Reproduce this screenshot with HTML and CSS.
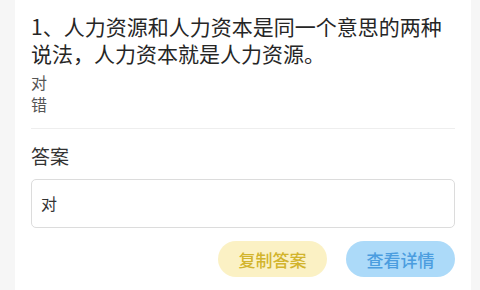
FILE: index.html
```html
<!DOCTYPE html>
<html lang="zh-CN">
<head>
    <meta charset="UTF-8">
    <meta name="viewport" content="width=device-width, initial-scale=1.0">
    <title>题目</title>
    <link rel="stylesheet" href="styles.css">
</head>
<body>
    <div class="card">
        <div class="question">1、人力资源和人力资本是同一个意思的两种说法，人力资本就是人力资源。</div>
        <ul class="options">
            <li>对</li>
            <li>错</li>
        </ul>
        <div class="divider"></div>
        <div class="answer-title">答案</div>
        <div class="answer-box">对</div>
        <div class="actions">
            <button class="btn btn-copy">复制答案</button>
            <button class="btn btn-detail">查看详情</button>
        </div>
    </div>
</body>
</html>
```

FILE: styles.css
```css
body {
    margin: 0;
    padding: 0 9px 0 15px;
    background-color: #f6f6f6;
    font-family: "Noto Sans CJK SC", "Noto Sans", sans-serif;
    color: #333;
}
.card {
    background-color: #fff;
    padding: 13px 16px 20px 16px;
}
.question {
    font-size: 21px;
    line-height: 27px;
    color: #262626;
}
.options {
    list-style: none;
    margin: 4px 0 0 0;
    padding: 0;
}
.options li {
    font-size: 16px;
    line-height: 22px;
    color: #555;
}
.divider {
    height: 1px;
    background-color: #eee;
    margin-top: 13px;
}
.answer-title {
    font-size: 19px;
    line-height: 26px;
    margin-top: 14px;
    color: #333;
}
.answer-box {
    margin-top: 10px;
    height: 47px;
    border: 1px solid #dcdcdc;
    border-radius: 5px;
    padding: 0 9px;
    font-size: 16px;
    line-height: 47px;
    color: #333;
}
.actions {
    display: flex;
    justify-content: flex-end;
    gap: 19px;
    margin-top: 13px;
}
.btn {
    font-family: inherit;
    font-size: 17px;
    font-weight: 500;
    height: 36px;
    width: 109px;
    border: none;
    border-radius: 18px;
    padding: 0;
}
.btn-copy {
    background-color: #fbf1c4;
    color: #d2b42c;
}
.btn-detail {
    background-color: #acdaf9;
    color: #4b9ddf;
}
```
